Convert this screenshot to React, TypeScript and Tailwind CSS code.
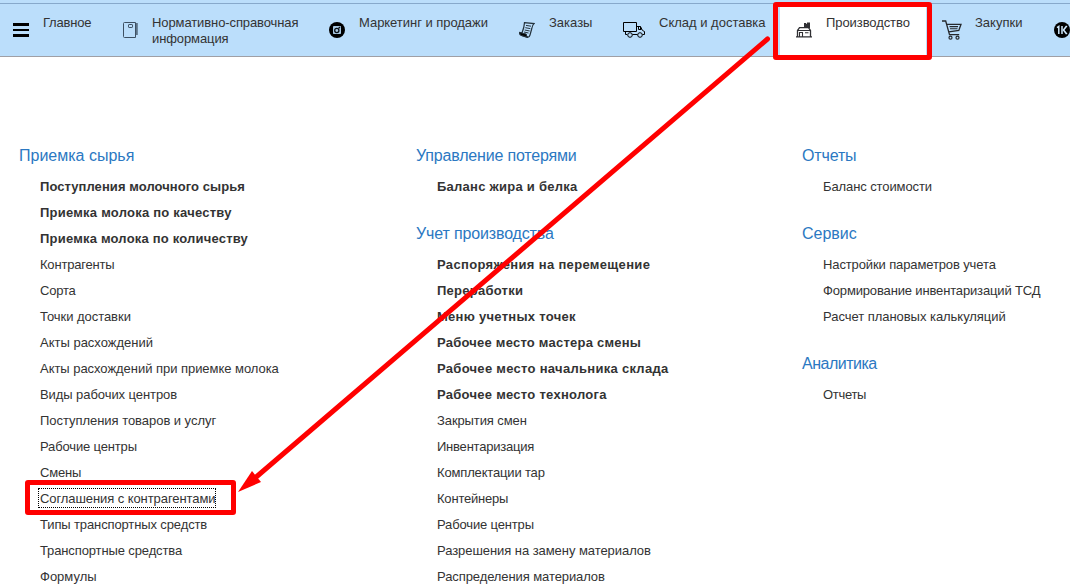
import React from 'react';

type Link = { text: string; bold?: boolean; focused?: boolean; track?: string };
type Group = { title: string; track?: string; links: Link[] };

const MenuIcon = () => (
  <svg width="16" height="16" viewBox="0 0 16 16" shapeRendering="crispEdges">
    <path d="M0 1h16v3H0zM0 7h16v2H0zM0 12h16v3H0z" fill="#000" />
  </svg>
);

const NotebookIcon = () => (
  <svg width="16" height="16" viewBox="0 0 16 16" fill="none" stroke="#3d5063">
    <path d="M.5 1.500Q.5.500 1.500.500H12.500v15H1.500Q.5 15.500.5 14.500z" />
    <rect x="5.500" y="2.500" width="4" height="3" rx=".6" />
    <path d="M13 2h1.800M13 4h1.800M13 6h1.800M13 8h1.800M13 10h1.800M13 12h1.800" strokeWidth="1.300" />
  </svg>
);

const CameraIcon = () => (
  <svg width="16" height="16" viewBox="0 0 16 16">
    <circle cx="8" cy="8" r="8" fill="#000" />
    <rect x="4" y="4" width="8" height="8" rx=".8" fill="#a9c9e3" />
    <circle cx="7.800" cy="8.500" r="2.100" fill="#a9c9e3" stroke="#0a0f14" strokeWidth="1.300" />
    <path d="M9.500 6.500 11 5" stroke="#0a0f14" strokeWidth="1.200" />
  </svg>
);

const ScrollIcon = () => (
  <svg width="16" height="16" viewBox="0 0 16 16" fill="none" stroke="#24323c">
    <path d="M5.500 .6 15 1.600Q13.400 3 12.800 6.500L11 13Q10.400 15.500 8.300 15.400L2.500 13.500Q.3 12.700.7 10.500L3 11Q5.300 5 5.500.6z" strokeWidth="1.200" />
    <path d="M.7 10.500 7.300 12.100Q7.200 14.500 9 15.300L2.500 13.500Q.3 12.700.7 10.500z" fill="#000" />
    <path d="m7 3.400 5 .8M6.300 5.700l5 .9M5.700 8l5 1M5 10l4.500 1" />
  </svg>
);

const TruckIcon = () => (
  <svg width="22" height="16" viewBox="0 0 22 16" fill="none" stroke="#000">
    <path d="M.5.500h13v9H.5zM2.500 9.500v3H4M9.500 12.500h5M13.500 4.500h4l2 4 2 1v3h-2" />
    <path d="M15.500 4.500v3h3M17.500 4.500v3" />
    <circle cx="7" cy="13" r="2.300" />
    <circle cx="17" cy="13" r="2.300" />
  </svg>
);

const FactoryIcon = () => (
  <svg width="16" height="16" viewBox="0 0 16 16" fill="none" stroke="#303034">
    <path d="M8 1h2v.7h1V.5h3V6H8z" fill="#303034" stroke="none" />
    <path d="M1.500 15V8.500L3.500 5.700h9l2 2.800V15" strokeWidth="1.300" />
    <path d="M1 8.500h14M0 14.800h16" strokeWidth="1.200" />
    <path d="M3.500 15v-4.500h3V15M9 10.700h3.500" strokeWidth="1.100" />
  </svg>
);

const CartIcon = () => (
  <svg className="-mt-0.5" width="20" height="20" viewBox="0 0 20 20" fill="none" stroke="#25282c">
    <path d="M0 1h3.700L7.500 14.700h9.700M5 4.300h14l-2.200 6.200-10 1.300" strokeWidth="1.300" />
    <path d="M7.500 6.600h8.500M8 8.800h7.500" strokeWidth="1.100" />
    <circle cx="8.500" cy="17.700" r="1.500" strokeWidth="1.200" />
    <circle cx="15.500" cy="17.700" r="1.500" strokeWidth="1.200" />
  </svg>
);

const OneKIcon = () => (
  <svg width="16" height="16" viewBox="0 0 16 16">
    <circle cx="8" cy="8" r="8" fill="#000" />
    <path d="m3 5.700 1.800-1.200V12M8 4v8" fill="none" stroke="#cfe8fc" strokeWidth="1.500" />
    <path d="M12 3.500 8.500 8l3.500 4.500 1.500-.8L10.500 8l3-3.700z" fill="#cfe8fc" />
  </svg>
);

const nav = [
  { label: ['Главное'], icon: <MenuIcon />, box: 'w-[107px] gap-[14px] pl-[13px]', track: 'tracking-[-0.2px]' },
  { label: ['Нормативно-справочная', 'информация'], icon: <NotebookIcon />, box: 'w-[206px] gap-[13px] pl-4', track: 'tracking-[-0.1px]' },
  { label: ['Маркетинг и продажи'], icon: <CameraIcon />, box: 'w-[190px] gap-[14px] pl-4', track: 'tracking-[-0.04px]' },
  { label: ['Заказы'], icon: <ScrollIcon />, box: 'w-[104px] gap-[14px] pl-4', track: '' },
  { label: ['Склад и доставка'], icon: <TruckIcon />, box: 'w-[173px] gap-[14px] pl-4', track: '' },
  { label: ['Производство'], icon: <FactoryIcon />, box: 'w-[146px] gap-[14px] bg-white pl-4', track: 'tracking-[-0.08px]' },
  { label: ['Закупки'], icon: <CartIcon />, box: 'w-[112px] gap-[13px] pl-4', track: '' },
  { label: [], icon: <OneKIcon />, box: 'w-[60px] pl-4', track: '' },
];

const columns: { box: string; groups: Group[] }[] = [
  {
    box: 'w-[397px]',
    groups: [
      {
        title: 'Приемка сырья',
        links: [
          { text: 'Поступления молочного сырья', bold: true, track: 'tracking-[0.06px]' },
          { text: 'Приемка молока по качеству', bold: true, track: 'tracking-[0.23px]' },
          { text: 'Приемка молока по количеству', bold: true, track: 'tracking-[0.2px]' },
          { text: 'Контрагенты', track: 'tracking-[-0.2px]' },
          { text: 'Сорта', track: 'tracking-[-0.2px]' },
          { text: 'Точки доставки', track: 'tracking-[-0.04px]' },
          { text: 'Акты расхождений' },
          { text: 'Акты расхождений при приемке молока', track: 'tracking-[-0.04px]' },
          { text: 'Виды рабочих центров', track: 'tracking-[-0.07px]' },
          { text: 'Поступления товаров и услуг', track: 'tracking-[-0.04px]' },
          { text: 'Рабочие центры', track: 'tracking-[-0.15px]' },
          { text: 'Смены', track: 'tracking-[-0.2px]' },
          { text: 'Соглашения с контрагентами', focused: true, track: 'tracking-[-0.08px]' },
          { text: 'Типы транспортных средств', track: 'tracking-[-0.12px]' },
          { text: 'Транспортные средства', track: 'tracking-[-0.12px]' },
          { text: 'Формулы' },
        ],
      },
    ],
  },
  {
    box: 'w-[386px]',
    groups: [
      {
        title: 'Управление потерями',
        track: 'tracking-[-0.18px]',
        links: [{ text: 'Баланс жира и белка', bold: true, track: 'tracking-[0.26px]' }],
      },
      {
        title: 'Учет производства',
        track: 'tracking-[-0.14px]',
        links: [
          { text: 'Распоряжения на перемещение', bold: true, track: 'tracking-[0.33px]' },
          { text: 'Переработки', bold: true, track: 'tracking-[0.25px]' },
          { text: 'Меню учетных точек', bold: true, track: 'tracking-[0.28px]' },
          { text: 'Рабочее место мастера смены', bold: true, track: 'tracking-[0.23px]' },
          { text: 'Рабочее место начальника склада', bold: true, track: 'tracking-[0.29px]' },
          { text: 'Рабочее место технолога', bold: true, track: 'tracking-[0.27px]' },
          { text: 'Закрытия смен', track: 'tracking-[-0.1px]' },
          { text: 'Инвентаризация', track: 'tracking-[-0.22px]' },
          { text: 'Комплектации тар', track: 'tracking-[-0.16px]' },
          { text: 'Контейнеры', track: 'tracking-[-0.2px]' },
          { text: 'Рабочие центры', track: 'tracking-[-0.15px]' },
          { text: 'Разрешения на замену материалов', track: 'tracking-[-0.06px]' },
          { text: 'Распределения материалов', track: 'tracking-[-0.09px]' },
        ],
      },
    ],
  },
  {
    box: 'w-[268px]',
    groups: [
      {
        title: 'Отчеты',
        track: 'tracking-[-0.15px]',
        links: [{ text: 'Баланс стоимости', track: 'tracking-[-0.1px]' }],
      },
      {
        title: 'Сервис',
        links: [
          { text: 'Настройки параметров учета', track: 'tracking-[-0.12px]' },
          { text: 'Формирование инвентаризаций ТСД', track: 'tracking-[-0.15px]' },
          { text: 'Расчет плановых калькуляций', track: 'tracking-[-0.04px]' },
        ],
      },
      {
        title: 'Аналитика',
        track: 'tracking-[-0.5px]',
        links: [{ text: 'Отчеты', track: 'tracking-[-0.3px]' }],
      },
    ],
  },
];

export default function App() {
  return (
    <div className="relative flex h-[586px] w-[1070px] flex-col overflow-hidden bg-white font-['Liberation_Sans',Arial,sans-serif] text-[13px] text-[#333]">
      <header className="flex h-[57px] shrink-0 flex-col border-b border-[#9f9fa5] bg-[#bbdefb]">
        <div className="h-1 shrink-0 border-b border-[#87a9cb]" />
        <nav className="flex h-[52px]">
          {nav.map((item, i) => (
            <a key={i} className={`flex shrink-0 ${item.box}`}>
              <span className="mt-[18px] shrink-0">{item.icon}</span>
              <span className="mt-[11px] leading-4 whitespace-nowrap">
                {item.label.map((line) => (
                  <span key={line} className={`block ${item.track}`}>{line}</span>
                ))}
              </span>
            </a>
          ))}
        </nav>
      </header>

      <main className="flex pt-[86px] pl-[19px]">
        {columns.map((col, i) => (
          <div key={i} className={`flex shrink-0 flex-col gap-[21px] ${col.box}`}>
            {col.groups.map((group) => (
              <section key={group.title}>
                <h2 className={`h-[31px] text-base leading-[26px] text-[#2b78c2] ${group.track ?? ''}`}>{group.title}</h2>
                <ul className="flex flex-col pl-[21px]">
                  {group.links.map((link) => (
                    <li key={link.text} className="flex h-[26px] items-center whitespace-nowrap">
                      <a
                        className={`${link.bold ? 'font-bold' : ''} ${link.track ?? ''} ${
                          link.focused
                            ? 'mb-0.5 -ml-px pt-0.5 pl-px leading-4 outline-1 outline-dotted outline-black'
                            : 'leading-[18px]'
                        }`}
                      >
                        {link.text}
                      </a>
                    </li>
                  ))}
                </ul>
              </section>
            ))}
          </div>
        ))}
      </main>

      <div className="absolute top-[2px] left-[773px] h-[58px] w-[159px] rounded-[3px] border-[5px] border-[#f00]" />
      <div className="absolute top-[480px] left-[25px] h-[35px] w-[211px] rounded-[3px] border-[5px] border-[#f00]" />
      <svg className="absolute top-0 left-0" width="1070" height="586" viewBox="0 0 1070 586">
        <path d="M767.500 39 255 478" stroke="#f00" strokeWidth="5" strokeLinecap="round" />
        <path d="m238 492 14-21 9 11z" fill="#f00" />
      </svg>
    </div>
  );
}
